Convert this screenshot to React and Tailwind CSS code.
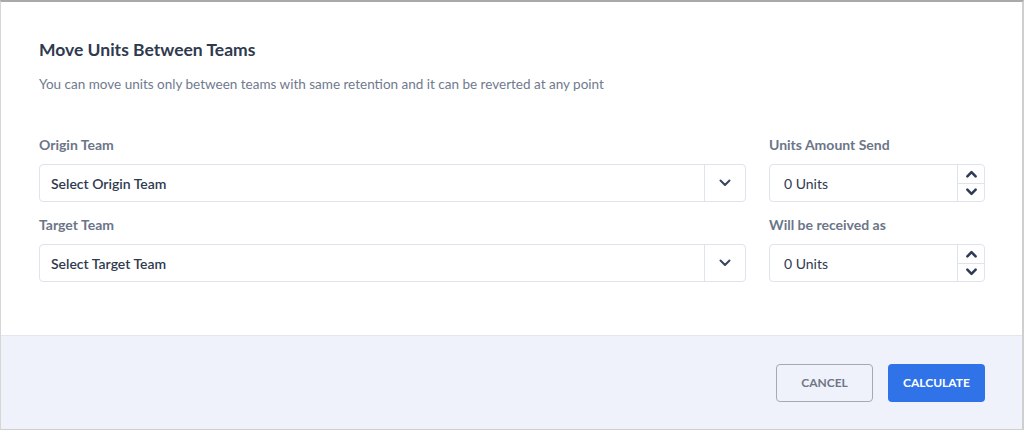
import React from 'react';

const ChevronDown = ({ className = '', strokeWidth = 2 }) => (
  <svg viewBox="0 0 12 8" className={className} fill="none" stroke="currentColor" strokeWidth={strokeWidth} strokeLinecap="round" strokeLinejoin="round">
    <path d="M1.5 1.5 6 6l4.5-4.5" />
  </svg>
);

const ChevronUp = ({ className = '', strokeWidth = 2 }) => (
  <svg viewBox="0 0 12 8" className={className} fill="none" stroke="currentColor" strokeWidth={strokeWidth} strokeLinecap="round" strokeLinejoin="round">
    <path d="M1.5 6.5 6 2l4.5 4.5" />
  </svg>
);

const SelectBox = ({ placeholder }) => (
  <div className="flex h-[38px] items-stretch rounded-[4px] border border-[#dfe3ea] bg-white">
    <div className="flex flex-1 items-center pl-[11px] text-[14px] font-semibold text-[#2f3a4f]">
      {placeholder}
    </div>
    <div className="flex w-[41px] items-center justify-center border-l border-[#dfe3ea] text-[#3b4660]">
      <ChevronDown className="h-[8px] w-[12px]" />
    </div>
  </div>
);

const UnitsInput = ({ value }) => (
  <div className="flex h-[38px] items-stretch rounded-[4px] border border-[#dfe3ea] bg-white">
    <div className="flex flex-1 items-center pl-[14px] text-[14px] text-[#2f3a4f]">
      {value}
    </div>
    <div className="flex w-[27px] flex-col border-l border-[#dfe3ea] text-[#2f3a55]">
      <div className="flex flex-1 items-center justify-center border-b border-[#dfe3ea]">
        <ChevronUp className="h-[8px] w-[11px]" strokeWidth={2.8} />
      </div>
      <div className="flex flex-1 items-center justify-center">
        <ChevronDown className="h-[8px] w-[11px]" strokeWidth={2.8} />
      </div>
    </div>
  </div>
);

const FieldLabel = ({ children }) => (
  <div className="mb-[9px] text-[14px] leading-[20px] font-bold text-[#6b7589]">{children}</div>
);

export default function App() {
  return (
    <div
      className="flex h-[430px] w-[1024px] flex-col border-t-2 border-r-2 border-b border-l border-t-[#a9a9a9] border-r-[#cfcfcf] border-b-[#cfcfcf] border-l-[#d6d6d6] bg-white"
      style={{ fontFamily: 'Lato, "Noto Sans", sans-serif' }}
    >
      <div className="flex-1 pt-[37px] pr-[37px] pl-[38px]">
        <h2 className="text-[17.5px] font-bold leading-[22px] text-[#2f3a4f]">Move Units Between Teams</h2>
        <p className="mt-[13px] text-[13.5px] leading-[20px] text-[#6f7a8e]">
          You can move units only between teams with same retention and it can be reverted at any point
        </p>

        <div className="mt-[41px] flex gap-[23px]">
          <div className="flex-1">
            <FieldLabel>Origin Team</FieldLabel>
            <SelectBox placeholder="Select Origin Team" />
            <div className="mt-[13px]">
              <FieldLabel>Target Team</FieldLabel>
              <SelectBox placeholder="Select Target Team" />
            </div>
          </div>
          <div className="w-[216px]">
            <FieldLabel>Units Amount Send</FieldLabel>
            <UnitsInput value="0 Units" />
            <div className="mt-[13px]">
              <FieldLabel>Will be received as</FieldLabel>
              <UnitsInput value="0 Units" />
            </div>
          </div>
        </div>
      </div>

      <div className="flex h-[94px] items-center justify-end gap-[15px] border-t border-[#e3e6ec] bg-[#eff2fa] px-[37px]">
        <button className="h-[38px] w-[97px] rounded-[4px] border border-[#a3a9b5] bg-transparent text-[12px] font-bold text-[#6f7686]">
          CANCEL
        </button>
        <button className="h-[38px] w-[97px] rounded-[4px] bg-[#3072e7] text-[12px] font-bold text-white">
          CALCULATE
        </button>
      </div>
    </div>
  );
}
